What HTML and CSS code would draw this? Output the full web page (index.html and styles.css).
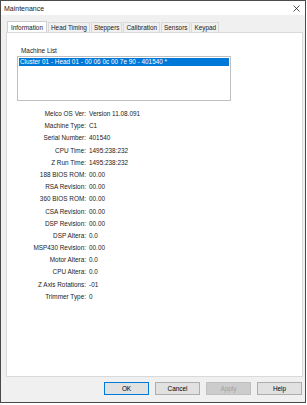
FILE: index.html
```html
<!DOCTYPE html>
<html lang="en">
<head>
    <meta charset="UTF-8">
    <meta name="viewport" content="width=device-width, initial-scale=1.0">
    <title>Maintenance</title>
    <link rel="stylesheet" href="styles.css">
</head>
<body>

    <div class="window">
        <!-- Title bar -->
        <div class="titlebar">
            <span class="title">Maintenance</span>
            <svg class="close" width="7" height="7" viewBox="0 0 7 7">
                <path d="M0.5 0.5 L6.5 6.5 M6.5 0.5 L0.5 6.5" stroke="#222" stroke-width="0.8" fill="none"/>
            </svg>
        </div>

        <div class="client">
            <!-- Tabs -->
            <div class="tabs">
                <div class="tab active">Information</div>
                <div class="tab">Head Timing</div>
                <div class="tab">Steppers</div>
                <div class="tab">Calibration</div>
                <div class="tab">Sensors</div>
                <div class="tab">Keypad</div>
            </div>

            <div class="panel">
                <div class="list-label">Machine List</div>
                <div class="listbox">
                    <div class="list-item selected">Cluster 01 - Head 01 - 00 06 0c 00 7e 90 - 401540 *</div>
                </div>

                <div class="info">
                    <span class="key">Melco OS Ver:</span><span class="val">Version 11.08.091</span>
                    <span class="key">Machine Type:</span><span class="val">C1</span>
                    <span class="key">Serial Number:</span><span class="val">401540</span>
                    <span class="key">CPU Time:</span><span class="val">1495:238:232</span>
                    <span class="key">Z Run Time:</span><span class="val">1495:238:232</span>
                    <span class="key">188 BIOS ROM:</span><span class="val">00.00</span>
                    <span class="key">RSA Revision:</span><span class="val">00.00</span>
                    <span class="key">360 BIOS ROM:</span><span class="val">00.00</span>
                    <span class="key">CSA Revision:</span><span class="val">00.00</span>
                    <span class="key">DSP Revision:</span><span class="val">00.00</span>
                    <span class="key">DSP Altera:</span><span class="val">0.0</span>
                    <span class="key">MSP430 Revision:</span><span class="val">00.00</span>
                    <span class="key">Motor Altera:</span><span class="val">0.0</span>
                    <span class="key">CPU Altera:</span><span class="val">0.0</span>
                    <span class="key">Z Axis Rotations:</span><span class="val">-01</span>
                    <span class="key">Trimmer Type:</span><span class="val">0</span>
                </div>
            </div>

            <!-- Dialog buttons -->
            <div class="buttons">
                <button class="btn default">OK</button>
                <button class="btn">Cancel</button>
                <button class="btn" disabled>Apply</button>
                <button class="btn">Help</button>
            </div>
        </div>
    </div>

</body>
</html>
```

FILE: styles.css
```css
body {
    margin: 0;
    background: #fff;
    font-family: "Liberation Sans", Arial, sans-serif;
    font-size: 6.4px;
    color: #1a1a1a;
}

.window {
    width: 306px;
    height: 403px;
    box-sizing: border-box;
    border: 1px solid #4a4a4a;
    background: #f0f0f0;
    display: flex;
    flex-direction: column;
}

.titlebar {
    height: 14px;
    background: #fff;
    display: flex;
    align-items: center;
    justify-content: space-between;
    padding: 0 5px 0 3px;
}

.title {
    font-size: 7px;
}

.client {
    flex: 1;
    display: flex;
    flex-direction: column;
    padding: 6px 2px 0 5px;
}

.tabs {
    display: flex;
    align-items: flex-end;
    height: 12px;
    padding-left: 1px;
    margin-bottom: -1px;
}

.tab {
    height: 9px;
    line-height: 9px;
    padding: 0 2px;
    margin: 0 1px 1px 0;
    background: #f0f0f0;
    border: 1px solid #d9d9d9;
    border-bottom: none;
}

.tab.active {
    height: 11px;
    line-height: 11px;
    margin-bottom: 0;
    background: #fff;
    border-color: #d0d0d0;
    padding: 0 3px;
}

.panel {
    height: 345px;
    background: #fff;
    border: 1px solid #d9d9d9;
    box-sizing: border-box;
    padding: 14px 0 0 10px;
}

.list-label {
    margin-left: 4px;
    height: 9px;
}

.listbox {
    width: 214px;
    height: 45px;
    box-sizing: border-box;
    border: 1px solid #bfbfbf;
    padding: 1px;
}

.list-item {
    height: 8px;
    line-height: 8px;
    padding-left: 1px;
}

.list-item.selected {
    background: #0078d7;
    color: #fff;
}

.info {
    display: grid;
    grid-template-columns: 69px auto;
    column-gap: 3px;
    grid-auto-rows: 12.2px;
    margin-top: 7px;
    line-height: 12px;
}

.key {
    text-align: right;
}

.buttons {
    display: flex;
    justify-content: flex-end;
    gap: 6px;
    padding: 5px 1px 0 0;
}

.btn {
    width: 45px;
    height: 13px;
    padding: 0;
    font-family: inherit;
    font-size: 6.4px;
    background: #e1e1e1;
    border: 1px solid #adadad;
    color: #000;
}

.btn.default {
    border-color: #0078d7;
}

.btn:disabled {
    background: #cccccc;
    border-color: #bfbfbf;
    color: #a0a0a0;
}
```
